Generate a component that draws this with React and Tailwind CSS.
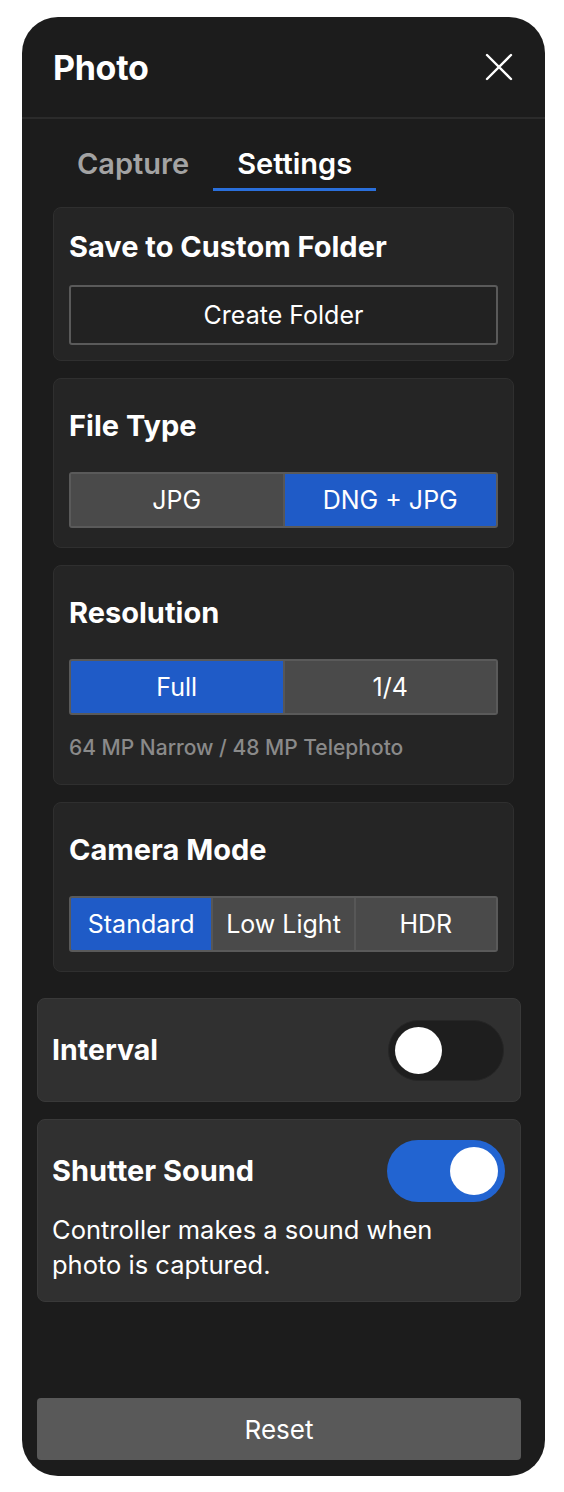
import React from "react";

function Seg({ items, active }) {
  return (
    <div className="flex h-[56px] w-full overflow-hidden rounded-[3px] border-2 border-[#5a5a5a] bg-[#4a4a4a]">
      {items.map((t, i) => (
        <div
          key={t}
          className={
            "flex flex-1 items-center justify-center pt-[2px] text-[25px] text-white " +
            (i > 0 ? "border-l-2 border-[#575757] " : "") +
            (i === active ? "bg-[#1f5bc7]" : "bg-[#4a4a4a]")
          }
        >
          {t}
        </div>
      ))}
    </div>
  );
}

function Card({ title, children, first }) {
  return (
    <div
      className={
        "rounded-[8px] border border-[#2f2f2f] bg-[#252525] px-[15px] " +
        (first ? "pt-[23px] pb-[15px]" : "pt-[31px] pb-[19px]")
      }
    >
      <div className="h-[32px] text-[29px] font-bold leading-[32px] text-white">{title}</div>
      <div className={first ? "mt-[22px]" : "mt-[30px]"}>{children}</div>
    </div>
  );
}

export default function App() {
  return (
    <div className="min-h-[1492px] bg-white pt-[17px] pl-[22px]" style={{ fontFamily: "Inter, 'Noto Sans', sans-serif" }}>
      <div className="flex h-[1459px] w-[523px] flex-col overflow-hidden rounded-[36px] bg-[#1c1c1c]">
        {/* header */}
        <div className="flex h-[102px] shrink-0 items-center justify-between border-b-2 border-[#2b2b2b] pl-[31px] pr-[32px]">
          <div className="text-[34px] font-bold tracking-[-0.3px] text-white">Photo</div>
          <svg width="28" height="28" viewBox="0 0 28 28" fill="none" stroke="white" strokeWidth="2.4" strokeLinecap="round">
            <path d="M2 2L26 26M26 2L2 26" />
          </svg>
        </div>

        {/* tabs */}
        <div className="flex pl-[31px] pt-[27px]">
          <div className="px-[24px] pb-[6px] text-[29px] font-semibold leading-[36px] text-[#a3a3a3]">Capture</div>
          <div className="border-b-[3px] border-[#2a6fdb] px-[24px] pb-[6px] text-[29px] font-semibold leading-[36px] text-white">Settings</div>
        </div>

        {/* settings cards */}
        <div className="mt-[16px] flex flex-col gap-[17px] px-[31px]">
          <Card title="Save to Custom Folder" first>
            <div className="flex h-[60px] items-center justify-center rounded-[3px] border-2 border-[#5a5a5a] bg-[#222222] pt-[2px] text-[25px] text-white">
              Create Folder
            </div>
          </Card>
          <Card title="File Type">
            <Seg items={["JPG", "DNG + JPG"]} active={1} />
          </Card>
          <div className="rounded-[8px] border border-[#2f2f2f] bg-[#252525] px-[15px] pt-[31px] pb-[24px]">
            <div className="h-[32px] text-[29px] font-bold leading-[32px] text-white">Resolution</div>
            <div className="mt-[30px]">
              <Seg items={["Full", "1/4"]} active={0} />
            </div>
            <div className="mt-[21px] text-[21px] font-medium leading-[24px] text-[#8a8a8a]">64 MP Narrow / 48 MP Telephoto</div>
          </div>
          <Card title="Camera Mode">
            <Seg items={["Standard", "Low Light", "HDR"]} active={0} />
          </Card>
        </div>

        {/* toggles */}
        <div className="mt-[26px] flex flex-col gap-[17px] pl-[15px] pr-[24px]">
          <div className="flex h-[104px] items-center justify-between rounded-[8px] border border-[#393939] bg-[#303030] pl-[14px] pr-[16px]">
            <div className="text-[28.5px] font-bold text-white">Interval</div>
            <div className="flex h-[61px] w-[116px] items-center rounded-full border border-[#262626] bg-[#1e1e1e] px-[6px]">
              <div className="h-[47px] w-[47px] rounded-full bg-white" />
            </div>
          </div>
          <div className="rounded-[8px] border border-[#393939] bg-[#303030] pb-[19px] pl-[14px] pr-[15px] pt-[20px]">
            <div className="flex items-center justify-between">
              <div className="text-[29px] font-bold text-white">Shutter Sound</div>
              <div className="flex h-[62px] w-[118px] items-center justify-end rounded-full bg-[#2264d1] px-[7px]">
                <div className="h-[48px] w-[48px] rounded-full bg-white" />
              </div>
            </div>
            <div className="mt-[10px] text-[25.5px] leading-[35px] text-white">
              Controller makes a sound when
              <br />
              photo is captured.
            </div>
          </div>
        </div>

        <div className="mt-auto pb-[16px] pl-[15px] pr-[24px]">
          <div className="flex h-[62px] items-center justify-center rounded-[4px] bg-[#595959] text-[26px] text-white">Reset</div>
        </div>
      </div>
    </div>
  );
}
